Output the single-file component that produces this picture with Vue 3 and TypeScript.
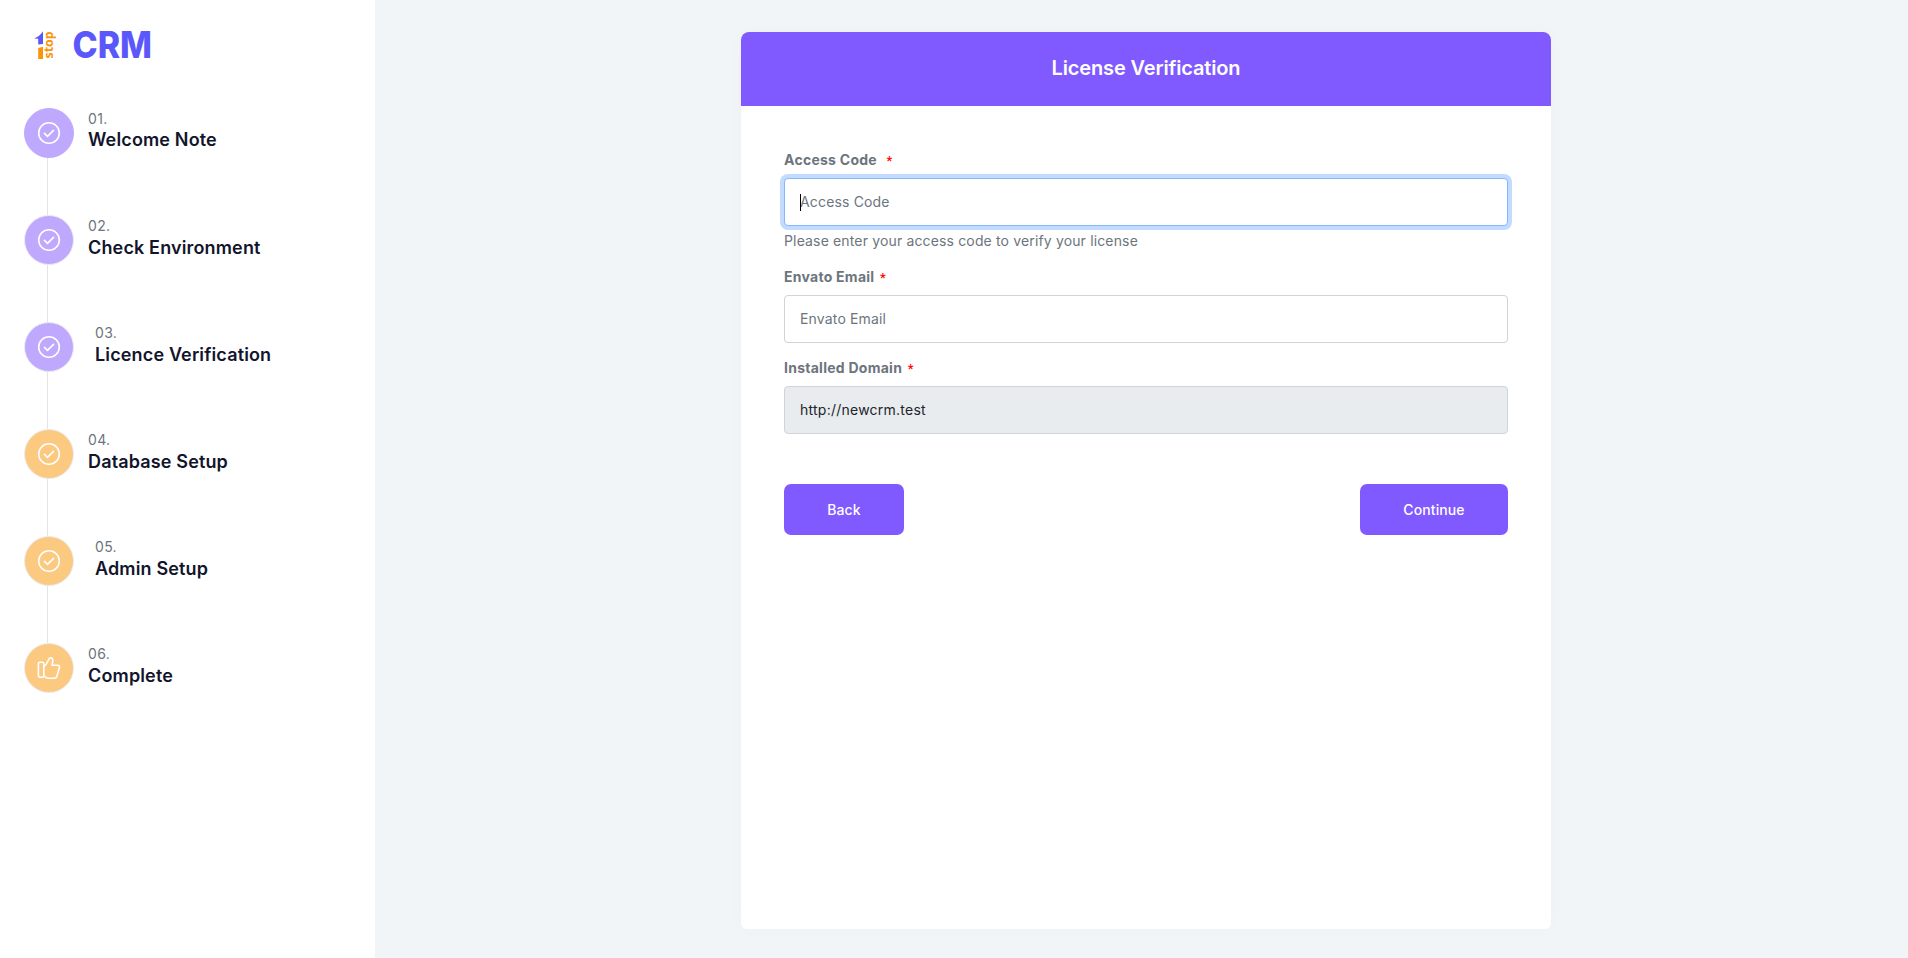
<script setup lang="ts">
import { ref } from 'vue'

interface Step {
  number: string
  title: string
  state: 'first' | 'done' | 'pending'
  indented?: boolean
  icon: 'check' | 'thumb'
}

const steps: Step[] = [
  { number: '01.', title: 'Welcome Note', state: 'first', icon: 'check' },
  { number: '02.', title: 'Check Environment', state: 'done', icon: 'check' },
  { number: '03.', title: 'Licence Verification', state: 'done', indented: true, icon: 'check' },
  { number: '04.', title: 'Database Setup', state: 'pending', icon: 'check' },
  { number: '05.', title: 'Admin Setup', state: 'pending', indented: true, icon: 'check' },
  { number: '06.', title: 'Complete', state: 'pending', icon: 'thumb' },
]

const accessCode = ref('')
const email = ref('')
const domain = ref('http://newcrm.test')
</script>

<template>
  <div class="page">
    <aside class="sidebar">
      <svg class="logo" width="120" height="34" viewBox="0 0 120 34" role="img" aria-label="1 stop CRM">
        <path d="M0 10.4C4 9.400 6.500 6.500 9 3.200V16L4.200 16.400V10.800Z" fill="#5b58fb" />
        <path d="M4.200 20 9 18.800V31H4.200Z" fill="#fb930b" />
        <text class="logo-stop" transform="translate(19.4 30.4) rotate(-90)" textLength="27" lengthAdjust="spacingAndGlyphs">stop</text>
        <text class="logo-crm" x="38.5" y="30" textLength="79.5" lengthAdjust="spacingAndGlyphs">CRM</text>
      </svg>
      <ol class="steps">
        <li v-for="step in steps" :key="step.number" class="step">
          <div class="rail">
            <span class="dot" :class="step.state">
              <svg v-if="step.icon === 'check'" width="24" height="24" viewBox="0 0 24 24">
                <circle cx="12" cy="12" r="10.3" />
                <path d="m7.5 12.4 3 3 6-6" />
              </svg>
              <svg v-else width="24" height="24" viewBox="0 0 24 24">
                <rect x="1.4" y="6.2" width="5.4" height="15" rx="1.4" />
                <path d="M7 10.2c2.6-1.4 3-3.2 4-5.4.8-1.9 1.4-2.9 2.7-2.9 1.7 0 2.3 1.5 2.1 3.1L15 9.200h5.500c1.700 0 2.300 1.200 1.900 2.500l-2.400 8.200c-.4 1.500-1.200 2.400-2.800 2.400h-5.500c-2.200 0-3.200-1.500-4.900-2.200" />
              </svg>
            </span>
          </div>
          <div class="step-text" :class="{ indented: step.indented }">
            <span class="step-number">{{ step.number }}</span>
            <span class="step-title">{{ step.title }}</span>
          </div>
        </li>
      </ol>
    </aside>
    <main class="content">
      <section class="card">
        <header class="card-header"><h1>License Verification</h1></header>
        <form class="form" @submit.prevent>
          <div class="field">
            <label for="code">Access Code <b class="wide">*</b></label>
            <div class="control">
              <input id="code" v-model="accessCode" class="focused" type="text" placeholder="Access Code" />
              <span class="caret"></span>
            </div>
            <small>Please enter your access code to verify your license</small>
          </div>
          <div class="field">
            <label for="email">Envato Email <b>*</b></label>
            <input id="email" v-model="email" type="text" placeholder="Envato Email" />
          </div>
          <div class="field">
            <label for="domain">Installed Domain <b>*</b></label>
            <input id="domain" v-model="domain" type="text" readonly />
          </div>
          <div class="actions">
            <button type="button" class="back">Back</button>
            <button type="submit" class="continue">Continue</button>
          </div>
        </form>
      </section>
    </main>
  </div>
</template>

<style>
body {
  margin: 0;
  overflow: hidden;
}
</style>

<style scoped>
* {
  box-sizing: border-box;
}
.page {
  display: flex;
  height: 100vh;
  background: #f1f5f8;
  font-family: Inter, "Liberation Sans", sans-serif;
  font-size: 14px;
  letter-spacing: 0.3px;
  color: #6c757d;
}
.sidebar {
  width: 375px;
  flex: none;
  background: #fff;
  padding: 28px 0 0 24px;
}
.logo {
  display: block;
  margin-left: 10px;
  overflow: visible;
}
.logo-stop {
  font: 700 12.5px "Noto Sans", sans-serif;
  letter-spacing: 0;
  fill: #fb930b;
}
.logo-crm {
  font: 800 37px Inter, sans-serif;
  letter-spacing: 0;
  fill: #5b58fb;
}
.steps {
  list-style: none;
  margin: 46px 0 0;
  padding: 0;
}
.step {
  display: flex;
  height: 107px;
}
.rail {
  width: 50px;
  background: linear-gradient(#e4e4e6, #e4e4e6) 23px 0 / 1px 100% no-repeat;
}
.step:last-child .rail {
  background: none;
}
.dot {
  display: flex;
  align-items: center;
  justify-content: center;
  width: 50px;
  height: 50px;
  border-radius: 50%;
  border: 1px solid #ececf0;
}
.dot.first {
  background: #bfa9ff;
  border-color: #bfa9ff;
}
.dot.done {
  background: #bfa9ff;
}
.dot.pending {
  background: #fcc980;
}
.dot svg {
  fill: none;
  stroke: #fff;
  stroke-width: 1.6;
  stroke-linecap: round;
  stroke-linejoin: round;
}
.step-text {
  display: flex;
  flex-direction: column;
  padding-left: 14px;
}
.step-text.indented {
  padding-left: 21px;
}
.step-number {
  margin-top: 1px;
  line-height: 20px;
}
.step-title {
  margin-top: 1px;
  line-height: 22px;
  font-size: 18px;
  font-weight: 600;
  letter-spacing: 0.15px;
  color: #12152b;
}
.step:first-child .step-title {
  margin-top: 0;
}
.content {
  flex: 1;
  display: flex;
  justify-content: center;
  padding: 32px 0 29px;
}
.card {
  width: 810px;
  margin-left: 9px;
  background: #fff;
  border-radius: 6px;
  box-shadow: 0 0 20px rgba(8, 21, 66, 0.02);
}
.card-header {
  display: flex;
  align-items: center;
  justify-content: center;
  height: 74px;
  background: #8059ff;
  border-radius: 8px 8px 0 0;
}
h1 {
  margin: 0 0 2px;
  font-size: 20px;
  font-weight: 600;
  letter-spacing: -0.15px;
  color: #fff;
}
.form {
  padding: 44px 43px 0;
}
.field {
  display: flex;
  flex-direction: column;
  margin-bottom: 15px;
}
label {
  margin-bottom: 8px;
  line-height: 20px;
  font-weight: 700;
  letter-spacing: 0.26px;
}
label b {
  margin-left: 2px;
  color: #f00;
  font-family: Roboto, sans-serif;
  font-size: 13px;
  font-weight: 500;
  line-height: 1;
}
label .wide {
  margin-left: 6px;
}
.control {
  position: relative;
  display: flex;
}
input {
  width: 100%;
  height: 48px;
  padding: 0 15px 2px;
  border: 1px solid #ced4da;
  border-radius: 4px;
  background: #fff;
  color: #212529;
  font: inherit;
  letter-spacing: 0.24px;
  outline: none;
}
input::placeholder {
  color: #6c757d;
  letter-spacing: 0.16px;
  opacity: 1;
}
input.focused {
  border-color: #86b7fe;
  box-shadow: 0 0 0 4px rgba(13, 110, 253, 0.25);
}
input[readonly] {
  background: #e9ecef;
}
.caret {
  position: absolute;
  left: 16px;
  top: 16px;
  width: 1px;
  height: 17px;
  background: #000;
}
small {
  margin-top: 5px;
  margin-bottom: 1px;
  line-height: 20px;
  font-size: 14px;
  letter-spacing: 0.15px;
}
.actions {
  display: flex;
  justify-content: space-between;
  padding-top: 35px;
}
button {
  height: 51px;
  padding: 0;
  border: 0;
  border-radius: 7px;
  background: #8059ff;
  color: #fff;
  font: inherit;
  font-weight: 500;
  letter-spacing: 0.1px;
}
.back {
  width: 120px;
}
.continue {
  width: 148px;
}
</style>
